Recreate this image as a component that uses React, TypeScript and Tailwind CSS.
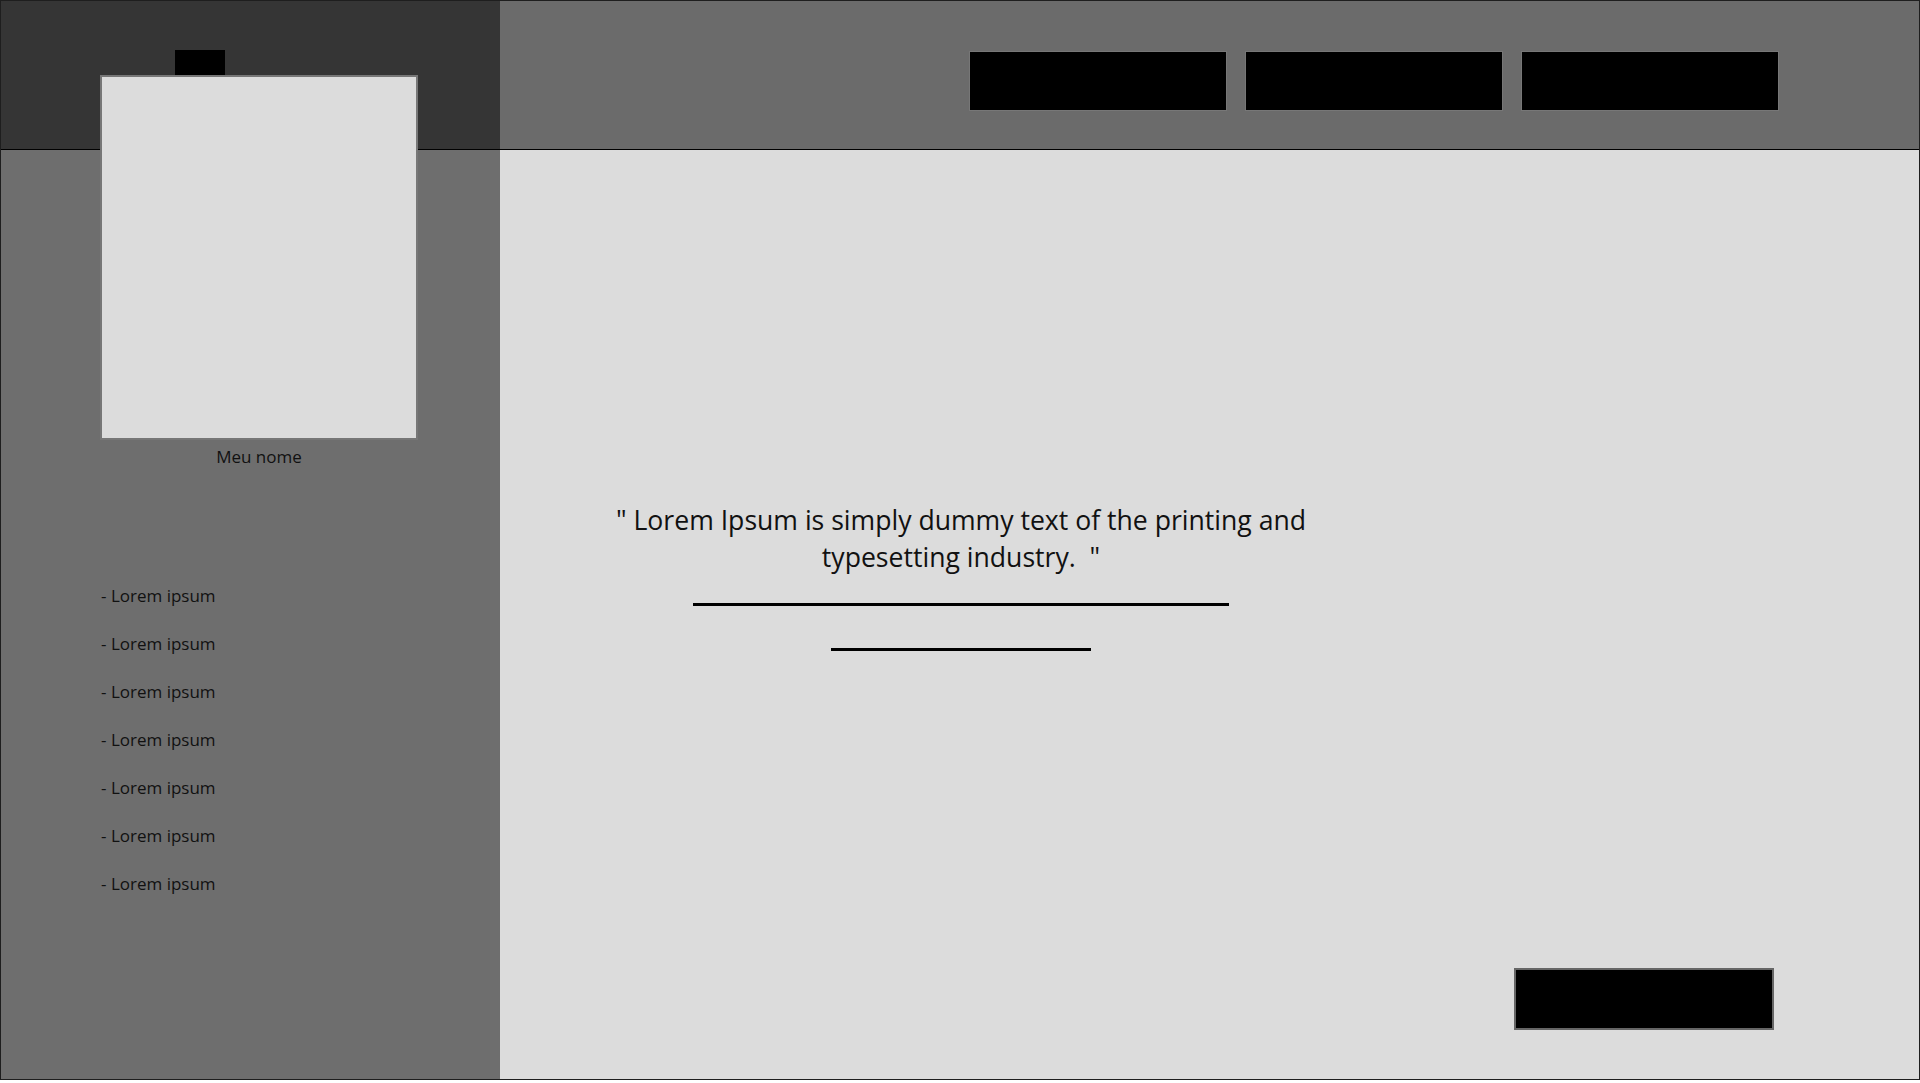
const items = Array.from({ length: 7 }, () => "- Lorem ipsum");

function NavButton() {
  return <div className="w-[258px] h-[60px] bg-black border border-[#777]" />;
}

export default function App() {
  return (
    <div
      className="w-[1920px] h-[1080px] border border-[#1e1e1e] flex overflow-hidden text-[#111]"
      style={{ fontFamily: '"Open Sans", "Noto Sans", sans-serif' }}
    >
      {/* coluna lateral */}
      <aside className="w-[499px] shrink-0 bg-[#6e6e6e] flex flex-col">
        <div className="h-[149px] shrink-0 bg-[#353535] border-b border-black pt-[49px] pl-[174px]">
          <div className="w-[50px] h-[25px] bg-black" />
        </div>
        <div className="relative z-10 -mt-[75px] ml-[99px] w-[318px] h-[365px] bg-[#dcdcdc] border-2 border-[#777]" />
        <p className="w-[318px] ml-[99px] mt-[5px] text-center text-[17px] leading-[24px]">Meu nome</p>
        <ul className="mt-[115px] ml-[100px] flex flex-col gap-[24px] text-[17px] leading-[24px]">
          {items.map((txt, i) => (
            <li key={i}>{txt}</li>
          ))}
        </ul>
      </aside>

      {/* conteudo */}
      <main className="flex-1 flex flex-col">
        <header className="h-[149px] shrink-0 bg-[#6b6b6b] border-b border-black flex justify-end items-start gap-[18px] pt-[50px] pr-[140px]">
          <NavButton />
          <NavButton />
          <NavButton />
        </header>
        <section className="flex-1 bg-[#dcdcdc] flex flex-col">
          <div className="ml-[101px] mt-[352px] w-[720px] flex flex-col items-center">
            <p className="text-center text-[26.6px] leading-[37px]">
              " Lorem Ipsum is simply dummy text of the printing and
              <br />
              typesetting industry.&nbsp; "
            </p>
            <div className="mt-[27px] w-[536px] h-[3px] bg-black" />
            <div className="mt-[42px] w-[260px] h-[3px] bg-black" />
          </div>
          <div className="mt-auto self-end mr-[145px] mb-[49px] w-[260px] h-[62px] bg-black border-2 border-[#666]" />
        </section>
      </main>
    </div>
  );
}
